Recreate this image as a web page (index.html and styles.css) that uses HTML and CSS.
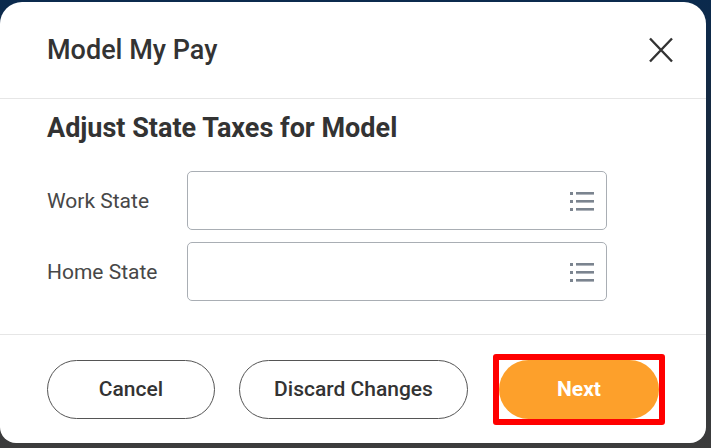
FILE: index.html
```html
<!DOCTYPE html>
<html lang="en">
<head>
<meta charset="utf-8">
<title>Model My Pay</title>
<link rel="stylesheet" href="styles.css">
</head>
<body>
<div class="dialog">
  <header class="dialog-header">
    <h1 class="dialog-title">Model My Pay</h1>
    <button class="close-btn" aria-label="Close">
      <svg width="26" height="26" viewBox="0 0 26 26"><path d="M2 1.5 L24 24.5 M24 1.5 L2 24.5" stroke="#333" stroke-width="2.4" fill="none"/></svg>
    </button>
  </header>
  <section class="dialog-body">
    <h2 class="section-title">Adjust State Taxes for Model</h2>
    <div class="form-row">
      <label class="field-label">Work State</label>
      <div class="prompt-input">
        <svg class="list-icon" width="24" height="20" viewBox="0 0 24 20"><g fill="#7b848f"><rect x="0" y="1" width="3" height="3"/><rect x="6" y="1" width="18" height="2.6"/><rect x="0" y="9" width="3" height="3"/><rect x="6" y="9" width="18" height="2.6"/><rect x="0" y="17" width="3" height="3"/><rect x="6" y="17" width="18" height="2.6"/></g></svg>
      </div>
    </div>
    <div class="form-row">
      <label class="field-label">Home State</label>
      <div class="prompt-input">
        <svg class="list-icon" width="24" height="20" viewBox="0 0 24 20"><g fill="#7b848f"><rect x="0" y="1" width="3" height="3"/><rect x="6" y="1" width="18" height="2.6"/><rect x="0" y="9" width="3" height="3"/><rect x="6" y="9" width="18" height="2.6"/><rect x="0" y="17" width="3" height="3"/><rect x="6" y="17" width="18" height="2.6"/></g></svg>
      </div>
    </div>
  </section>
  <footer class="dialog-footer">
    <button class="btn btn-outline btn-cancel">Cancel</button>
    <button class="btn btn-outline btn-discard">Discard Changes</button>
    <span class="highlight">
      <button class="btn btn-primary">Next</button>
    </span>
  </footer>
</div>
</body>
</html>
```

FILE: styles.css
```css
html, body {
  margin: 0;
  padding: 0;
}
body {
  width: 711px;
  height: 448px;
  overflow: hidden;
  background: linear-gradient(180deg, #0b2a4d 0%, #1d2a3a 40%, #3c3c3c 100%);
  font-family: Roboto, "Liberation Sans", Arial, sans-serif;
  color: #333;
}
.dialog {
  margin-top: 2px;
  width: 706px;
  height: 441px;
  background: #fff;
  border-radius: 22px 22px 16px 16px;
  display: flex;
  flex-direction: column;
  overflow: hidden;
}
.dialog-header {
  height: 96px;
  flex: none;
  display: flex;
  align-items: center;
  justify-content: space-between;
  padding: 0 32px 0 47px;
  border-bottom: 1px solid #e6e6e6;
}
.dialog-title {
  margin: 0;
  font-size: 27px;
  font-weight: 500;
  color: #333;
  line-height: 28px;
}
.close-btn {
  border: 0;
  background: none;
  padding: 0;
  width: 26px;
  height: 26px;
  display: flex;
}
.dialog-body {
  flex: none;
  height: 220px;
  padding: 15px 0 0 47px;
  border-bottom: 1px solid #e6e6e6;
}
.section-title {
  margin: 0 0 29px;
  font-size: 27px;
  font-weight: 700;
  line-height: 28px;
  color: #333;
}
.form-row {
  display: flex;
  align-items: center;
  margin-bottom: 12px;
}
.field-label {
  width: 140px;
  font-size: 21px;
  color: #474747;
}
.prompt-input {
  box-sizing: border-box;
  width: 420px;
  height: 59px;
  border: 1px solid #a9aeb4;
  border-radius: 5px;
  display: flex;
  align-items: center;
  justify-content: flex-end;
  padding-right: 12px;
}
.dialog-footer {
  flex: 1;
  display: flex;
  align-items: center;
  padding: 0 0 0 47px;
}
.btn {
  box-sizing: border-box;
  height: 59px;
  border-radius: 30px;
  font-family: Roboto, "Liberation Sans", Arial, sans-serif;
  font-size: 21px;
  font-weight: 500;
  padding: 0;
}
.btn-outline {
  background: #fff;
  border: 1.5px solid #555;
  color: #333;
}
.btn-cancel { width: 168px; margin-right: 24px; }
.btn-discard { width: 229px; margin-right: 25px; }
.highlight {
  display: flex;
  border: 6px solid #ff0000;
  border-radius: 3px;
}
.btn-primary {
  width: 160px;
  border: 0;
  background: #fda02b;
  color: #fff;
  font-weight: 700;
}
```
